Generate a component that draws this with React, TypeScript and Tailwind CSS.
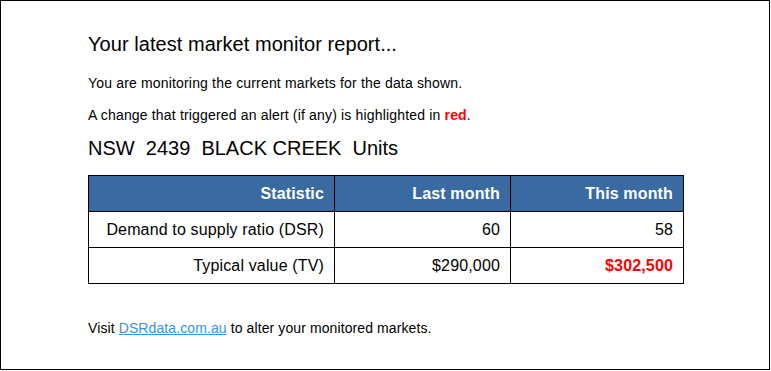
import React from "react";

export default function App() {
  return (
    <div className="w-[770px] h-[370px] border border-black bg-white text-black" style={{ fontFamily: '"Liberation Sans", Arial, sans-serif' }}>
      <div className="pl-[87px] pt-[32px]">
        <h1 className="text-[20px] leading-[23px] font-normal tracking-[0.05px]">Your latest market monitor report...</h1>
        <p className="mt-[20px] text-[14px] leading-[15px] tracking-[0.17px]">You are monitoring the current markets for the data shown.</p>
        <p className="mt-[17px] text-[14px] leading-[15px] tracking-[0.17px]">
          A change that triggered an alert (if any) is highlighted in <span className="font-bold text-[#ff0000]">red</span>.
        </p>
        <h2 className="mt-[14px] text-[20px] leading-[23px] font-normal whitespace-pre">NSW  2439  BLACK CREEK  Units</h2>
        <table className="mt-[15px] border-collapse text-[16px] leading-[18px] tracking-[0.15px]">
          <thead>
            <tr className="bg-[#396aa1] text-white">
              <th className="w-[246px] h-[36px] border border-black px-[10px] text-right font-bold">Statistic</th>
              <th className="w-[176px] h-[36px] border border-black px-[10px] text-right font-bold">Last month</th>
              <th className="w-[173px] h-[36px] border border-black px-[10px] text-right font-bold">This month</th>
            </tr>
          </thead>
          <tbody>
            <tr>
              <td className="h-[36px] border border-black px-[10px] text-right">Demand to supply ratio (DSR)</td>
              <td className="h-[36px] border border-black px-[10px] text-right">60</td>
              <td className="h-[36px] border border-black px-[10px] text-right">58</td>
            </tr>
            <tr>
              <td className="h-[36px] border border-black px-[10px] text-right">Typical value (TV)</td>
              <td className="h-[36px] border border-black px-[10px] text-right">$290,000</td>
              <td className="h-[36px] border border-black px-[10px] text-right font-bold text-[#ff0000]">$302,500</td>
            </tr>
          </tbody>
        </table>
        <p className="mt-[37px] text-[14px] leading-[15px] tracking-[0.1px]">
          Visit <a href="#" className="text-[#3d8fe0] underline">DSRdata.com.au</a> to alter your monitored markets.
        </p>
      </div>
    </div>
  );
}
